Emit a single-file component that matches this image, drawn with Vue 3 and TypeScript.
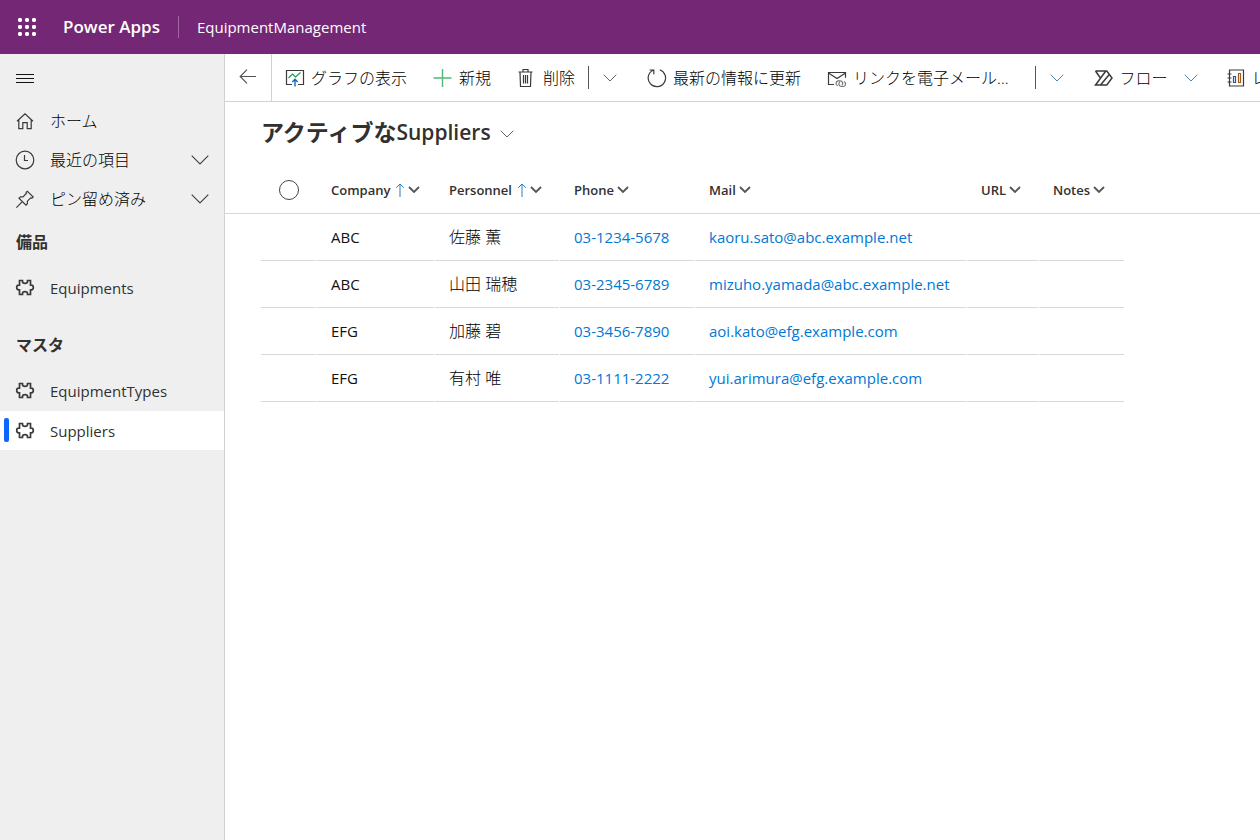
<script setup lang="ts">
import { ref } from 'vue'

interface Supplier {
  company: string
  personnel: string
  phone: string
  mail: string
}
interface Column {
  key: string
  label: string
  sorted: boolean
}

const columns: Column[] = [
  { key: 'company', label: 'Company', sorted: true },
  { key: 'personnel', label: 'Personnel', sorted: true },
  { key: 'phone', label: 'Phone', sorted: false },
  { key: 'mail', label: 'Mail', sorted: false },
  { key: 'url', label: 'URL', sorted: false },
  { key: 'notes', label: 'Notes', sorted: false },
]

const suppliers: Supplier[] = [
  { company: 'ABC', personnel: '佐藤 薫', phone: '03-1234-5678', mail: 'kaoru.sato@abc.example.net' },
  { company: 'ABC', personnel: '山田 瑞穂', phone: '03-2345-6789', mail: 'mizuho.yamada@abc.example.net' },
  { company: 'EFG', personnel: '加藤 碧', phone: '03-3456-7890', mail: 'aoi.kato@efg.example.com' },
  { company: 'EFG', personnel: '有村 唯', phone: '03-1111-2222', mail: 'yui.arimura@efg.example.com' },
]

const groups = [
  { title: '備品', items: ['Equipments'] },
  { title: 'マスタ', items: ['EquipmentTypes', 'Suppliers'] },
]
const current = ref('Suppliers')
const allSelected = ref(false)
</script>

<template>
  <div class="app">
    <header class="topbar">
      <button class="waffle" aria-label="アプリ起動ツール">
        <svg width="18" height="18" viewBox="0 0 18 18">
          <template v-for="r in 3" :key="r">
            <rect v-for="c in 3" :key="c" :x="(c - 1) * 7" :y="(r - 1) * 7" width="4" height="4" rx="1.4" />
          </template>
        </svg>
      </button>
      <a class="brand" href="#">Power Apps</a>
      <span class="sep"></span>
      <a class="appname" href="#">EquipmentManagement</a>
    </header>

    <div class="body">
      <nav class="sidebar">
        <button class="burger" aria-label="メニュー">
          <svg width="18" height="10" viewBox="0 0 18 10" stroke="#111"><path d="M0 1.500h18M0 5.500h18M0 9.500h18" /></svg>
        </button>
        <ul class="list top">
          <li>
            <a class="item" href="#">
              <svg class="ico" viewBox="0 0 20 20"><path d="M2 10.200 10 2.700l8 7.500M3.800 8.600v9h4v-6h4.400v6h4v-9" /></svg>
              <span>ホーム</span>
            </a>
          </li>
          <li>
            <button class="item">
              <svg class="ico" viewBox="0 0 20 20"><circle cx="10" cy="10" r="8.800" /><path d="M9.500 5v5.500H13" /></svg>
              <span>最近の項目</span>
              <svg class="chev" width="18" height="10" viewBox="0 0 18 10"><path d="m.7.700 8.300 8.300L17.300.700" /></svg>
            </button>
          </li>
          <li>
            <button class="item">
              <svg class="ico" viewBox="0 0 20 20"><path d="m12.500 2.300 5.700 5.700-1.200 1.200-1.300-.3-3.300 3.300v2.600l-1.400 1.400-7-7 1.400-1.400H8l3.300-3.300-.2-1.200zM7.300 12.700 1.400 18.600" /></svg>
              <span>ピン留め済み</span>
              <svg class="chev" width="18" height="10" viewBox="0 0 18 10"><path d="m.7.700 8.300 8.300L17.300.700" /></svg>
            </button>
          </li>
        </ul>
        <section v-for="g in groups" :key="g.title" class="group">
          <h2>{{ g.title }}</h2>
          <ul class="list">
            <li v-for="name in g.items" :key="name">
              <a class="item" :class="{ active: current === name }" href="#" @click.prevent="current = name">
                <svg class="ico puzzle" viewBox="0 0 20 20">
                  <path d="M4.500 2.500h3v1a2.500 1.800 0 0 0 5 0v-1h3v4.700h.8a2 2.300 0 0 1 0 4.600h-.8v4.700h-3v-1a2.500 1.800 0 0 0-5 0v1h-3v-4.700h-.8a2 2.300 0 0 1 0-4.600h.8z" />
                </svg>
                <span>{{ name }}</span>
              </a>
            </li>
          </ul>
        </section>
      </nav>

      <main class="main">
        <div class="commands">
          <button class="back" aria-label="戻る">
            <svg width="18" height="16" viewBox="0 0 18 16"><path d="M17 8.500H1.500M8 1.700 1.200 8.500 8 15.300" stroke="#555" stroke-width="1.200" /></svg>
          </button>
          <button class="cmd">
            <svg class="ico" viewBox="0 0 20 20">
              <path d="M7 16.500H1.500v-14h17v14H13" />
              <path d="m3.500 10 4-4 3 3 5-4.500" stroke="#1a9b50" />
              <path d="M10 18.500V11.500M7.300 14 10 11.300l2.700 2.700" stroke="#1068b8" stroke-width="1.400" />
            </svg>
            <span>グラフの表示</span>
          </button>
          <button class="cmd">
            <svg class="ico" viewBox="0 0 20 20"><path d="M9.500 1v18M.5 10h18" stroke="#4fba78" stroke-width="1.400" /></svg>
            <span>新規</span>
          </button>
          <button class="cmd">
            <svg class="ico" viewBox="0 0 20 20"><path d="M1.500 4h14M6 4V1.500h5V4M3 4l.5 14.500h10L14 4M6.500 7v8.500M8.500 7v8.500M10.500 7v8.500" /></svg>
            <span>削除</span>
          </button>
          <button class="more split" aria-label="その他の削除コマンド">
            <svg class="small" viewBox="0 0 14 8"><path d="m.7.700 6.300 6.300L13.300.700" /></svg>
          </button>
          <button class="cmd">
            <svg class="ico" viewBox="0 0 20 20"><path d="M12.800 1.800A8.700 8.700 0 1 1 6 2.200M2.600 2H6.800v4.300" /></svg>
            <span>最新の情報に更新</span>
          </button>
          <button class="cmd mail">
            <svg class="ico" viewBox="0 0 20 20">
              <path d="M7 16.500H1.500v-12h17v5.200M1.500 5l8.500 5.500L18.500 5" />
              <path d="M10.800 17.800a2.600 2.600 0 0 1 .2-5h2.200a2.600 2.600 0 0 1 1.600 4.600M16.800 13.500a2.600 2.600 0 0 1-.2 5h-2.200a2.600 2.600 0 0 1-1.600-4.600" stroke="#777" />
            </svg>
            <span>リンクを電子メール...</span>
          </button>
          <button class="more split" aria-label="その他のメール コマンド">
            <svg class="small blue" viewBox="0 0 14 8"><path d="m.7.700 6.300 6.300L13.300.700" /></svg>
          </button>
          <button class="cmd">
            <svg class="ico flow" viewBox="0 0 20 20"><path d="M1.500 3h11.300l5.200 7-5.200 7H1.500l10.300-14M1.500 3l4.600 6.500M6.500 17l8.800-10.500" /></svg>
            <span>フロー</span>
            <svg class="small blue tail" viewBox="0 0 14 8"><path d="m.7.700 6.300 6.300L13.300.700" /></svg>
          </button>
          <button class="cmd">
            <svg class="ico" viewBox="0 0 20 20">
              <path d="M3.500 2h14v16h-14zM1.500 6h4M1.500 10h4M1.500 14h4" />
              <path d="M7.500 8.500h2v6h-2z" stroke="#24589c" /><path d="M12.500 5.500h2v9h-2z" stroke="#9a5a20" />
            </svg>
            <span>レポートの実行</span>
          </button>
        </div>

        <h1>
          <button class="view"><span class="jp">アクティブな</span><span>Suppliers</span>
            <svg class="small" viewBox="0 0 14 8"><path d="m.7.700 6.300 6.300L13.300.700" /></svg>
          </button>
        </h1>

        <table>
          <colgroup>
            <col class="c-gutter" /><col class="c-select" />
            <col v-for="c in columns" :key="c.key" :class="'c-' + c.key" />
            <col />
          </colgroup>
          <thead>
            <tr>
              <td></td>
              <th scope="col" class="select">
                <input v-model="allSelected" type="checkbox" aria-label="すべての行を選択" />
              </th>
              <th v-for="c in columns" :key="c.key" scope="col">
                <button class="colhead">
                  <span>{{ c.label }}</span>
                  <svg v-if="c.sorted" class="sort" width="10" height="14" viewBox="0 0 10 14"><path d="M5 14V1M1.200 4.800 5 1l3.800 3.800" /></svg>
                  <svg class="caret" width="12" height="8" viewBox="0 0 12 8"><path d="m1 1 5 5 5-5" /></svg>
                </button>
              </th>
              <td></td>
            </tr>
          </thead>
          <tbody>
            <tr v-for="s in suppliers" :key="s.mail">
              <td></td>
              <td class="cell"></td>
              <td class="cell">{{ s.company }}</td>
              <td class="cell name">{{ s.personnel }}</td>
              <td class="cell"><a :href="'tel:' + s.phone">{{ s.phone }}</a></td>
              <td class="cell"><a :href="'mailto:' + s.mail">{{ s.mail }}</a></td>
              <td class="cell"></td>
              <td class="cell"></td>
              <td></td>
            </tr>
          </tbody>
        </table>
      </main>
    </div>
  </div>
</template>

<style>
body {
  margin: 0;
  overflow: hidden;
}
</style>

<style scoped>
.app {
  display: flex;
  flex-direction: column;
  min-height: 100vh;
  background: #fff;
  color: #323130;
  font: 15px/20px "Open Sans", "Noto Sans CJK JP", sans-serif;
}
button {
  border: 0;
  padding: 0;
  background: none;
  color: inherit;
  font: inherit;
  cursor: pointer;
}
a {
  color: inherit;
  text-decoration: none;
}
svg {
  flex: none;
  fill: none;
}
.topbar {
  display: flex;
  align-items: center;
  height: 54px;
  background: #742774;
  color: #fff;
}
.waffle {
  display: flex;
  padding: 18px;
}
.waffle svg {
  fill: #fff;
}
.brand {
  margin-left: 9px;
  font-size: 17px;
  font-weight: 600;
}
.sep {
  width: 1px;
  height: 22px;
  margin: 0 18px;
  background: #9d689d;
}
.body {
  display: flex;
  flex: 1;
}
.sidebar {
  flex: none;
  width: 224px;
  border-right: 1px solid #d2d2d2;
  background: #efefef;
}
.burger {
  display: flex;
  align-items: center;
  height: 47px;
  padding: 0 16px;
}
.list {
  display: flex;
  flex-direction: column;
  gap: 1px;
  margin: 0;
  padding: 0;
  list-style: none;
}
.top {
  gap: 0;
  margin-bottom: 2px;
  color: #000;
  font-size: 16px;
  font-weight: 300;
}
.item {
  position: relative;
  display: flex;
  align-items: center;
  gap: 15px;
  box-sizing: border-box;
  width: 100%;
  height: 39px;
  padding: 0 15px;
}
.ico {
  width: 20px;
  height: 20px;
  stroke: #3b3a39;
  stroke-width: 1.2;
}
.puzzle {
  stroke-width: 1.7;
}
.flow {
  stroke-width: 1.5;
}
.chev {
  margin-left: auto;
  stroke: #444;
  stroke-width: 1.2;
}
.active {
  background: #fff;
}
.active::before {
  content: "";
  position: absolute;
  left: 4px;
  top: 7px;
  bottom: 8px;
  width: 5px;
  border-radius: 2px;
  background: #0a66ff;
}
.group + .group {
  margin-top: 16px;
}
h2 {
  margin: 0;
  padding: 0 16px 4px;
  font-size: 16px;
  line-height: 44px;
  font-weight: 700;
}
.list span,
.cmd span {
  white-space: nowrap;
}
.main {
  flex: 1;
  min-width: 0;
}
.commands {
  display: flex;
  height: 47px;
  overflow: hidden;
  border-bottom: 1px solid #d2d2d2;
  color: #000;
  font-size: 16px;
  font-weight: 300;
}
.back {
  flex: none;
  width: 47px;
  border-right: 1px solid #d2d2d2;
}
.cmd {
  display: flex;
  flex: none;
  align-items: center;
  gap: 6px;
  padding: 0 13px;
}
.more {
  display: flex;
  flex: none;
  align-items: center;
  padding: 0 17px 0 0;
}
.split::before {
  content: "";
  width: 1px;
  height: 23px;
  margin-right: 14px;
  background: #555;
}
.mail {
  margin-right: 13px;
}
.small {
  width: 14px;
  height: 8px;
  stroke: #666;
}
.blue {
  stroke: #4b86b4;
}
.tail {
  margin: 0 2px 0 10px;
}
h1 {
  margin: 0;
  padding: 16px 36px 0;
  font-size: 21px;
  line-height: 28px;
  font-weight: 600;
}
.jp {
  font-size: 23px;
}
.view {
  display: flex;
  align-items: center;
}
.view .small {
  margin: 4px 0 0 9px;
}
table {
  width: 100%;
  margin-top: 20px;
  border-collapse: separate;
  border-spacing: 0;
  table-layout: fixed;
}
.c-gutter { width: 36px; }
.c-select { width: 56px; }
.c-company { width: 118px; }
.c-personnel { width: 125px; }
.c-phone { width: 135px; }
.c-mail { width: 272px; }
.c-url { width: 72px; }
.c-notes { width: 86px; }
th,
td {
  box-sizing: border-box;
  height: 47px;
  padding: 0 0 0 14px;
  text-align: left;
  white-space: nowrap;
}
thead th,
thead td {
  height: 48px;
  border-bottom: 1px solid #d8d8d8;
}
.select input {
  display: block;
  box-sizing: border-box;
  width: 20px;
  height: 20px;
  margin: 0 0 0 4px;
  appearance: none;
  border: 1px solid #444;
  border-radius: 50%;
}
.colhead {
  display: flex;
  align-items: center;
  gap: 3px;
  font-size: 13px;
  font-weight: 600;
}
.sort {
  margin-left: 2px;
  stroke: #2b7cc0;
}
.caret {
  stroke: #555;
  stroke-width: 1.8;
}
.cell {
  background: linear-gradient(#d8d8d8, #d8d8d8) left bottom / calc(100% - 1px) 1px no-repeat;
  padding-bottom: 1px;
  color: #111;
}
.name {
  color: #000;
  font-size: 16px;
  font-weight: 300;
}
.cell a {
  color: #0078d4;
}
</style>
